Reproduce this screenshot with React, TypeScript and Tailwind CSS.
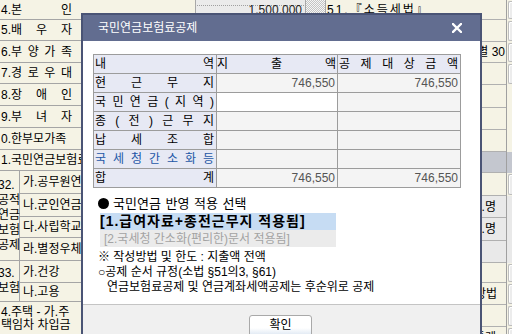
import React from "react";

const Spread = ({ parts, cls }: { parts: string[]; cls?: string }) => (
  <div className={"flex justify-between w-full " + (cls ?? "")}>
    {parts.map((p, i) => (
      <span key={i}>{p}</span>
    ))}
  </div>
);

const leftRows: { h: string; parts?: string[]; text?: string }[] = [
  { h: "h-[20px]", parts: ["4.본", "인"] },
  { h: "h-[21px]", parts: ["5.배", "우", "자"] },
  { h: "h-[22px]", parts: ["6.부", "양", "가", "족"] },
  { h: "h-[21px]", parts: ["7.경", "로", "우", "대"] },
  { h: "h-[22px]", parts: ["8.장", "애", "인"] },
  { h: "h-[22px]", parts: ["9.부", "녀", "자"] },
  { h: "h-[22px]", text: "0.한부모가족" },
  { h: "h-[21px]", text: "1.국민연금보험료" },
];

const rightRows: { h: string; bg: string; text?: string; pr?: string; btn?: boolean }[] = [
  { h: "h-[20px]", bg: "bg-[#f5f3e5]", btn: true },
  { h: "h-[22px]", bg: "bg-[#f5f3e5]", btn: true },
  { h: "h-[21px]", bg: "bg-[#f5f3e5]", text: "특별 30", pr: "pr-[1px]", btn: true },
  { h: "h-[22px]", bg: "bg-[#f5f3e5]", btn: true },
  { h: "h-[23px]", bg: "bg-[#f5f3e5]" },
  { h: "h-[22px]", bg: "bg-[#f5f3e5]" },
  { h: "h-[22px]", bg: "bg-[#f5f3e5]" },
  { h: "h-[21px]", bg: "bg-[#c4c7cf]" },
  { h: "h-[23px]", bg: "bg-[#f5f3e5]", btn: true },
  { h: "h-[22px]", bg: "bg-[#e9e9e9]", text: "2.명", pr: "pr-[10px]" },
  { h: "h-[23px]", bg: "bg-[#e9e9e9]", text: "2.명", pr: "pr-[10px]" },
  { h: "h-[22px]", bg: "bg-[#e9e9e9]" },
  { h: "h-[20px]", bg: "bg-[#f5f3e5]", btn: true },
  { h: "h-[22px]", bg: "bg-[#f5f3e5]", text: "작성방법", pr: "pr-[9px]", btn: true },
  { h: "h-[22px]", bg: "bg-[#f5f3e5]", btn: true },
  { h: "h-[22px]", bg: "bg-[#f5f3e5]", text: "통계", pr: "pr-[10px]", btn: true },
];

type Cell = { parts?: string[]; num?: string; bg: string; blue?: boolean; pad?: string };

const LAV = "bg-[#e7e9f4]";
const GRY = "bg-[#f4f4f4]";

const tableRows: Cell[][] = [
  [
    { parts: ["내", "역"], bg: LAV },
    { parts: ["지", "출", "액"], bg: LAV, pad: "pl-0 pr-[1px]" },
    { parts: ["공", "제", "대", "상", "금", "액"], bg: LAV, pad: "pl-[1px] pr-[2px]" },
  ],
  [
    { parts: ["현", "근", "무", "지"], bg: LAV },
    { num: "746,550", bg: GRY },
    { num: "746,550", bg: GRY },
  ],
  [
    { parts: ["국", "민", "연", "금", "(", "지", "역", ")"], bg: LAV },
    { bg: "bg-white" },
    { bg: GRY },
  ],
  [
    { parts: ["종", "(", "전", ")", "근", "무", "지"], bg: LAV },
    { bg: GRY },
    { bg: GRY },
  ],
  [
    { parts: ["납", "세", "조", "합"], bg: LAV },
    { bg: GRY },
    { bg: GRY },
  ],
  [
    { parts: ["국", "세", "청", "간", "소", "화", "등"], bg: LAV, blue: true },
    { bg: GRY },
    { bg: GRY },
  ],
  [
    { parts: ["합", "계"], bg: LAV },
    { num: "746,550", bg: GRY },
    { num: "746,550", bg: GRY },
  ],
];

export default function App() {
  return (
    <div className="relative w-[512px] h-[334px] overflow-hidden bg-[#f5f3e5] text-[12px] leading-[14px] text-black font-['Liberation_Sans','Noto_Sans_CJK_KR',sans-serif]">
      {/* background sheet */}
      <div className="flex h-full">
        {/* left panel */}
        <div className="w-[196px] shrink-0 flex flex-col border-r border-[#a8a8a8]">
          {leftRows.map((r, i) => (
            <div key={i} className={`${r.h} shrink-0 border-b border-[#a5a5a5] flex items-center pl-[1px] whitespace-nowrap`}>
              {r.parts ? (
                <div className="w-[71px]">
                  <Spread parts={r.parts} />
                </div>
              ) : (
                <span>{r.text}</span>
              )}
            </div>
          ))}
          {/* group 32 */}
          <div className="h-[90px] shrink-0 flex border-b border-[#a5a5a5]">
            <div className="w-[22px] shrink-0 border-r border-[#a5a5a5] flex flex-col justify-center leading-[15px] -ml-[2px] pl-0 whitespace-nowrap overflow-visible">
              <span>32.</span>
              <span>공적</span>
              <span>연금</span>
              <span>보험</span>
              <span>공제</span>
            </div>
            <div className="flex-1 flex flex-col whitespace-nowrap">
              <div className="h-[23px] border-b border-[#a5a5a5] flex items-center pl-[3px]">가.공무원연금</div>
              <div className="h-[23px] border-b border-[#a5a5a5] flex items-center pl-[3px]">나.군인연금</div>
              <div className="h-[21px] border-b border-[#a5a5a5] flex items-center pl-[3px]">다.사립학교교직원</div>
              <div className="flex-1 flex items-center pl-[3px]">라.별정우체국</div>
            </div>
          </div>
          {/* group 33 */}
          <div className="h-[41px] shrink-0 flex border-b border-[#a5a5a5]">
            <div className="w-[22px] shrink-0 border-r border-[#a5a5a5] flex flex-col justify-center leading-[15px] -ml-[2px] whitespace-nowrap">
              <span>33.</span>
              <span>보험</span>
            </div>
            <div className="flex-1 flex flex-col whitespace-nowrap">
              <div className="h-[22px] border-b border-[#a5a5a5] flex items-center pl-[3px]">가.건강</div>
              <div className="flex-1 flex items-center pl-[3px]">나.고용</div>
            </div>
          </div>
          <div className="flex-1 pt-[4px] pl-[1px] leading-[13px] whitespace-nowrap">
            <div>4.주택 - 가.주</div>
            <div>택임차 차입금</div>
          </div>
        </div>

        {/* amount column */}
        <div className="w-[110px] shrink-0 flex flex-col border-r border-[#a8a8a8]">
          <div className="relative h-[20px] bg-[#ebebeb] border-b border-[#a5a5a5] flex items-center justify-end pr-[3px] text-[#222]">
            <div className="absolute left-[1px] right-[1px] top-[5px] border-t border-dotted border-[#a0a0a0]" />
            <span className="relative">1,500,000</span>
          </div>
        </div>

        {/* dotted column */}
        <div className="w-[20px] shrink-0 flex flex-col border-r border-[#a8a8a8]">
          <div className="h-[20px] border-b border-[#a5a5a5] bg-[image:repeating-conic-gradient(#c4c4c4_0%_25%,#f6f6f6_0%_50%)] bg-[length:2px_2px]" />
        </div>

        {/* right panel */}
        <div className="w-[181px] shrink-0 flex flex-col border-r border-[#a0a0a0]">
          {rightRows.map((r, i) => (
            <div key={i} className={`${r.h} shrink-0 ${r.bg} border-b border-[#b0b0b0] flex items-center ${i === 0 ? "justify-start pl-[1px]" : "justify-end"} ${r.pr ?? ""} whitespace-nowrap`}>
              {i === 0 ? <span className="tracking-[2px]">51.『소득세법』</span> : r.text ? <span>{r.text}</span> : null}
            </div>
          ))}
          <div className="flex-1 bg-[#f5f3e5]" />
        </div>

        {/* button column */}
        <div className="flex-1 flex flex-col">
          {rightRows.map((r, i) => (
            <div key={i} className={`${r.h} shrink-0 ${r.btn ? "bg-[#f5f3e5]" : r.bg} flex items-stretch py-[1px] pl-[1px]`}>
              {r.btn ? <div className="flex-1 rounded-l-[2px] border border-r-0 border-[#bdbdbd] bg-[#ececec] shadow-[inset_1px_1px_0_#ffffff]" /> : null}
            </div>
          ))}
          <div className="flex-1 py-[1px] pl-[1px] flex">
            <div className="flex-1 rounded-l-[2px] border border-r-0 border-[#bdbdbd] bg-[#ececec]" />
          </div>
        </div>
      </div>

      {/* dialog */}
      <div className="absolute left-[81px] top-[13px] w-[401px] h-[330px] border-2 border-[#4a5475] bg-white flex flex-col">
        <div className="h-[26px] shrink-0 bg-[#626d90] flex items-center justify-between pl-[15px] pr-[18px] text-white">
          <span className="text-[12px] leading-[14px]">국민연금보험료공제</span>
          <svg width="10" height="10" viewBox="0 0 10 10">
            <path d="M1 1 L9 9 M9 1 L1 9" stroke="#ffffff" strokeWidth="2.3" strokeLinecap="square" />
          </svg>
        </div>

        <div className="h-[263px] shrink-0 pl-[10px] pt-[13px] flex flex-col">
          <div className="w-[368px] border-l border-t border-[#9c9c9c] grid grid-cols-[123px_121px_123px]">
            {tableRows.map((row, ri) =>
              row.map((c, ci) => (
                <div
                  key={`${ri}-${ci}`}
                  className={`h-[19px] border-r border-b border-[#9c9c9c] ${c.bg} flex items-center ${c.pad ?? "pl-[1px] pr-[2px]"} ${c.blue ? "text-[#1d57a6]" : "text-black"}`}
                >
                  {c.parts ? <Spread parts={c.parts} /> : null}
                  {c.num ? <span className="ml-auto text-[#555555]">{c.num}</span> : null}
                </div>
              ))
            )}
          </div>

          <div className="mt-[8px] h-[15px] ml-[5px] flex items-center text-[13px] leading-[15px]">
            <span className="w-[11px] h-[11px] rounded-full bg-black mr-[4px] shrink-0" />
            <span className="[word-spacing:1px]">국민연금 반영 적용 선택</span>
          </div>

          <div className="mt-[2px] ml-[7px] w-[236px] h-[17px] bg-[#c6dcf3] flex items-center text-[14px] leading-[15px] font-bold tracking-[1px] whitespace-nowrap">
            [1.급여자료+종전근무지 적용됨]
          </div>
          <div className="ml-[7px] w-[236px] h-[17px] bg-[#ebebeb] flex items-center pl-[4px] leading-[14px] text-[#a3a3a3] whitespace-nowrap">
            [2.국세청 간소화(편리한)문서 적용됨]
          </div>

          <div className="mt-[3px] ml-[5px] leading-[15px] whitespace-nowrap">
            <div>※ 작성방법 및 한도 : 지출액 전액</div>
            <div>○공제 순서 규정(소법 §51의3, §61)</div>
            <div className="pl-[9px]">연금보험료공제 및 연금계좌세액공제는 후순위로 공제</div>
          </div>
        </div>

        <div className="flex-1 border-t border-[#c4c4c4] bg-[#f0f0f0] pt-[10px]">
          <div className="ml-[166px] w-[63px] h-[22px] rounded-[3px] border border-[#a9a9a9] bg-gradient-to-b from-white from-60% to-[#dbe5f1] flex justify-center pt-[2px] leading-[14px]">
            확인
          </div>
        </div>
      </div>
    </div>
  );
}
